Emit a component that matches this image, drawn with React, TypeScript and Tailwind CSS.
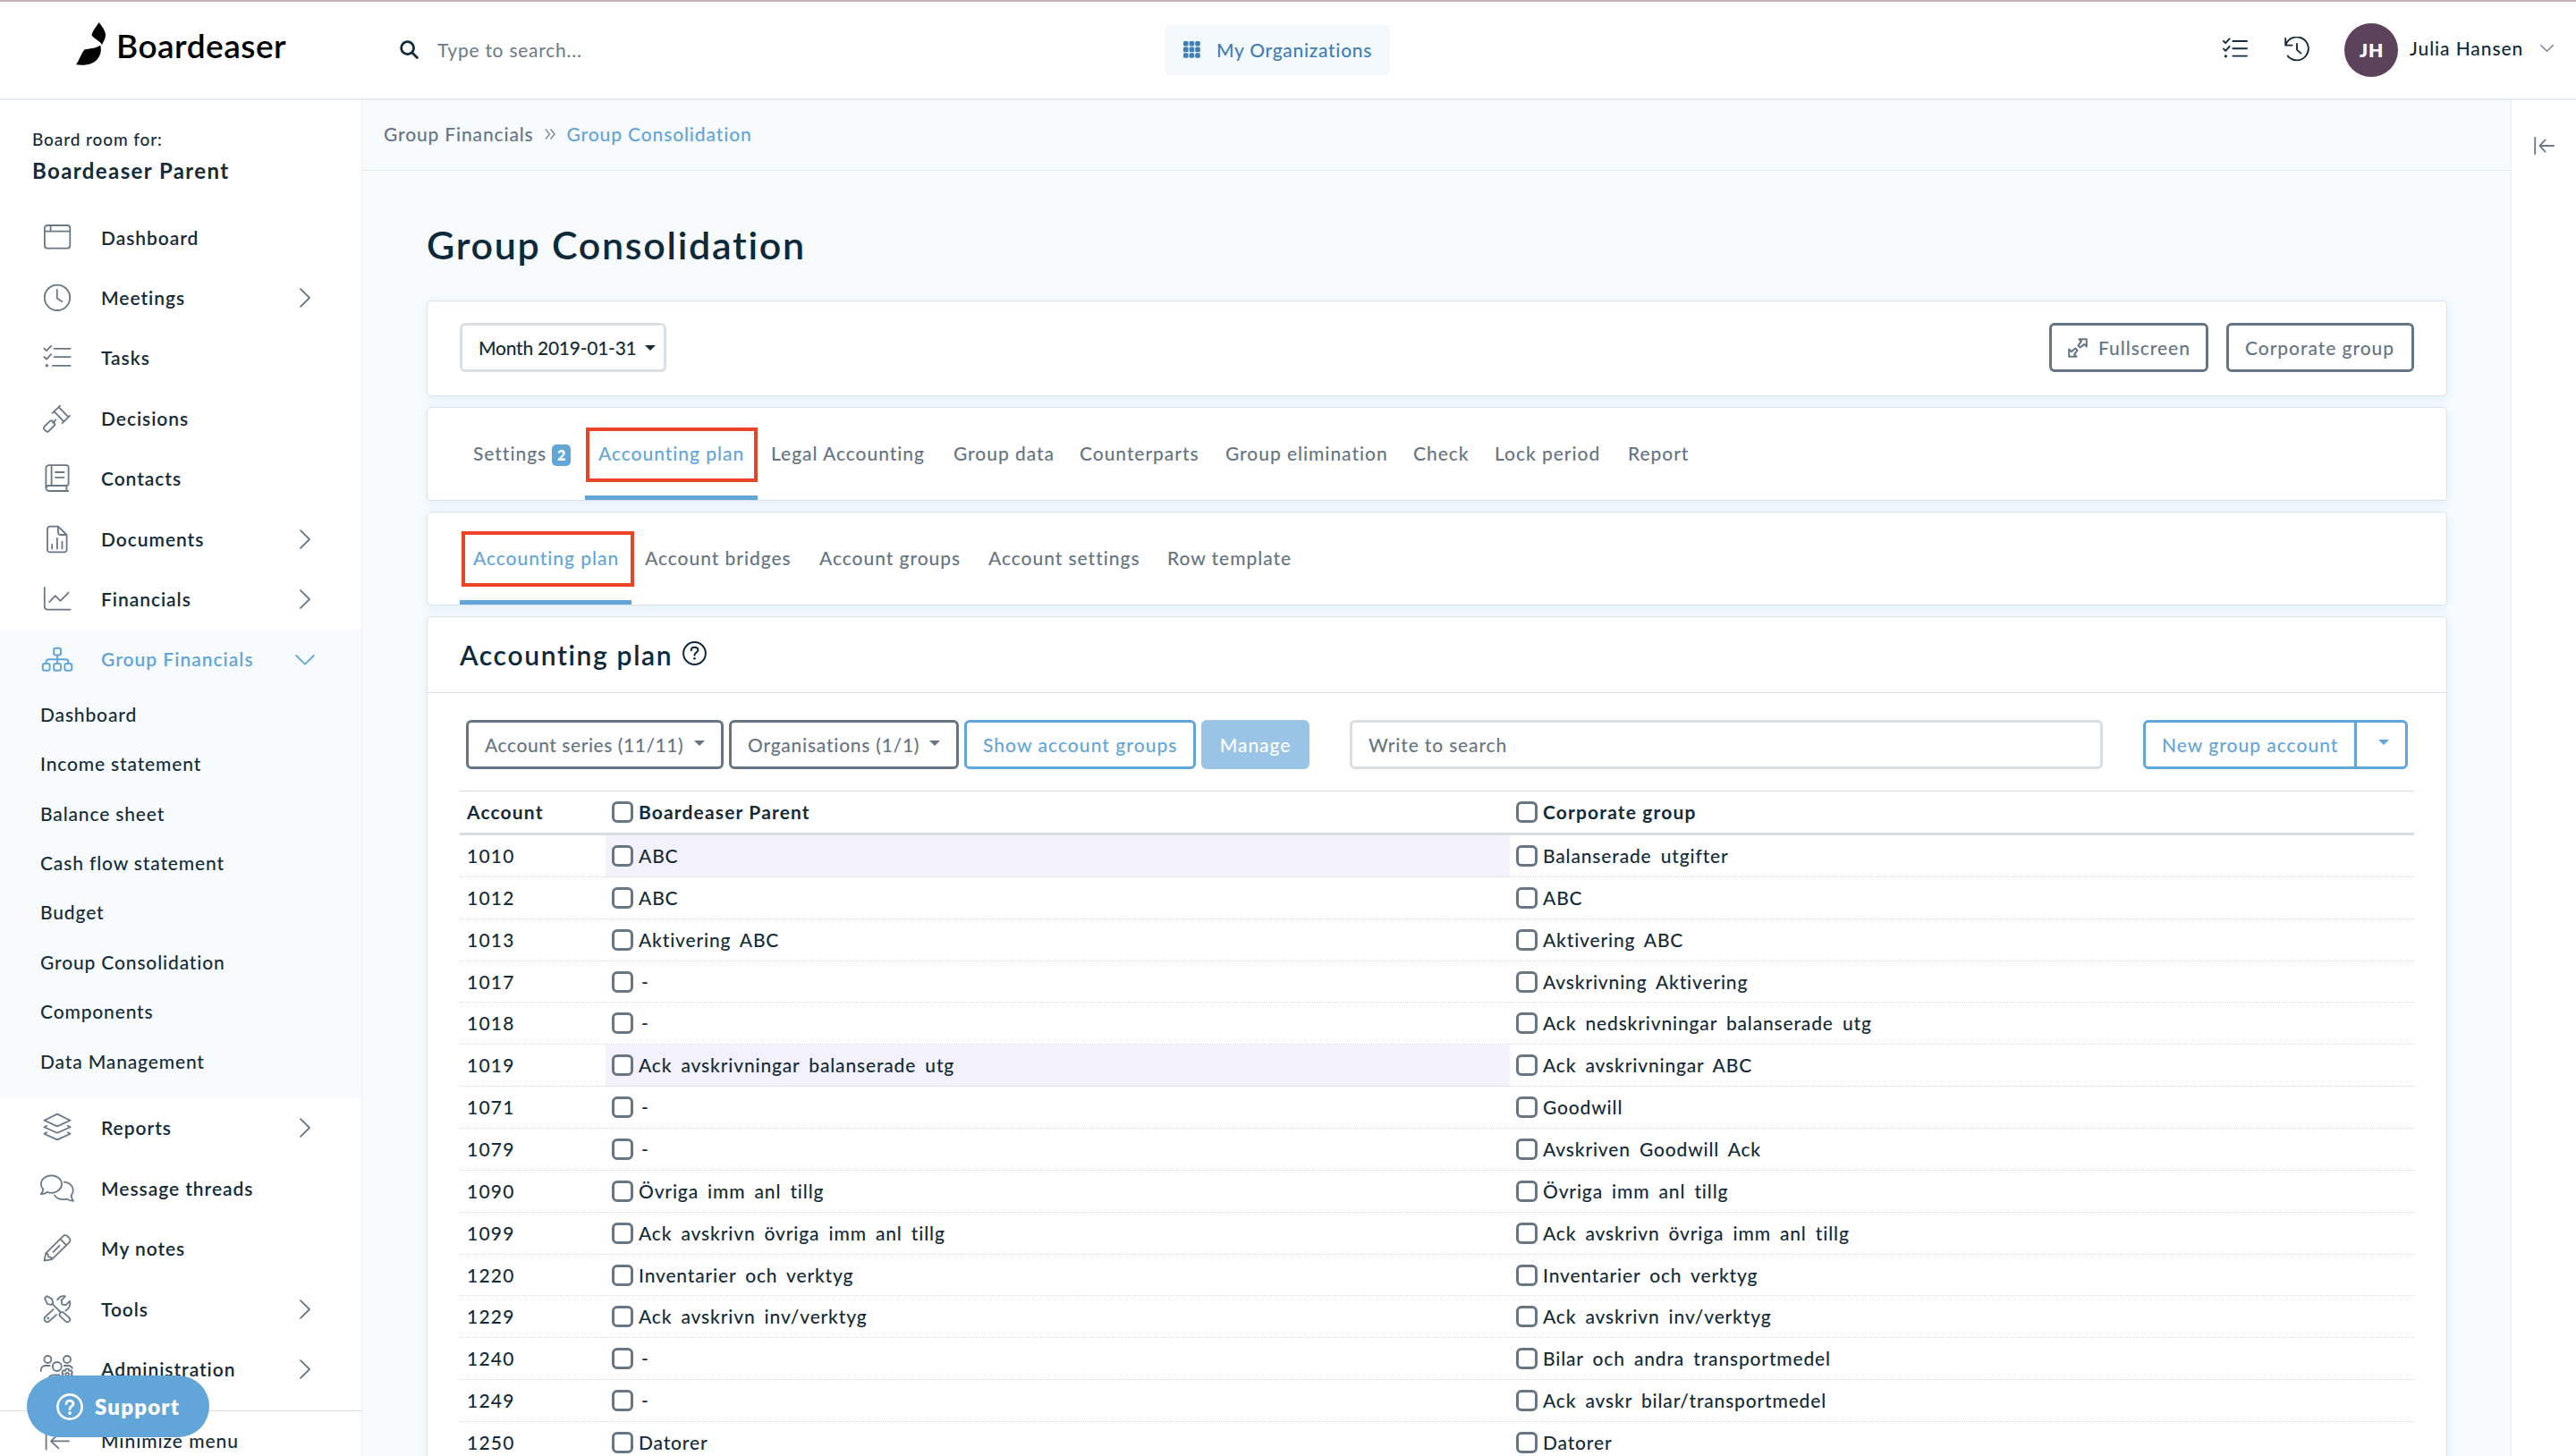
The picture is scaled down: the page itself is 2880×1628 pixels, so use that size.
import React, { ReactNode } from 'react';

type IconProps = { children: ReactNode };

function MenuIcon({ children }: IconProps) {
  return (
    <svg
      className="h-[30px] w-[38px] shrink-0 overflow-visible"
      viewBox="0 0 38 30"
      fill="none"
      stroke="currentColor"
      strokeWidth="1.8"
      strokeLinecap="round"
      strokeLinejoin="round"
    >
      {children}
    </svg>
  );
}

const dashboardIcon = (
  <MenuIcon>
    <rect x="4.9" y="1" width="28.4" height="25.6" rx="3" />
    <path d="M5 7.6h28.2M11.6 1v6.6" />
  </MenuIcon>
);
const clockIcon = (
  <MenuIcon>
    <circle cx="19" cy="14.8" r="14.2" />
    <path d="M18.8 6v9.4l5.6 3.9" />
  </MenuIcon>
);
const tasksIcon = (
  <MenuIcon>
    <path d="M4.4 4.6 7 7.2 12.2 1.8M4.4 14 7 16.6l5.2-5.4M15.6 4.8H33.6M15.6 14.2H33.6M13.8 23.8H33.6" />
    <circle cx="7.4" cy="23.8" r="1.7" fill="currentColor" stroke="none" />
  </MenuIcon>
);
const gavelIcon = (
  <MenuIcon>
    <path d="M13.6 8.9 22.2.6M24.6 20.2 33 11.8M15.6 7.2 26.2 18.2M20.8 2.4 31.3 13.2M17.4 16.4 14 19.8" />
    <rect x="3.6" y="20" width="13" height="7" rx="2.4" transform="rotate(-45 10.1 23.5)" />
  </MenuIcon>
);
const contactsIcon = (
  <MenuIcon>
    <path d="M31.2 29H10a3.6 3.6 0 0 1-3.6-3.6V3.4A3.2 3.2 0 0 1 9.6 .2H29a2.6 2.6 0 0 1 2.6 2.6V20.8a2.2 2.2 0 0 1-2.2 2.2H9.6a3 3 0 0 0-3 2.6M29.4 23v6M12.6 .4v22.4M17 8h9.6M17 13.8h9.6" />
  </MenuIcon>
);
const documentsIcon = (
  <MenuIcon>
    <path d="M20 .6h-9A3 3 0 0 0 8 3.6V26.4a3 3 0 0 0 3 3h15.6a3 3 0 0 0 3-3V10zM20 .6V7.6A2.4 2.4 0 0 0 22.4 10h7.2M13.2 21v4.4M18.9 13.8V25.4M24.5 17.6v7.8" />
  </MenuIcon>
);
const chartIcon = (
  <MenuIcon>
    <path d="M4.8 2v21.2a3.4 3.4 0 0 0 3.4 3.4H33.6M10.2 18.2 16.8 11.2l5.7 5.6L31.6 7.6" />
  </MenuIcon>
);
const orgIcon = (
  <MenuIcon>
    <g strokeWidth="2">
      <rect x="15.2" y="2.8" width="7.8" height="7.8" rx="2" />
      <rect x="2.8" y="20" width="7.8" height="7.8" rx="2" />
      <rect x="15.2" y="20" width="7.8" height="7.8" rx="2" />
      <rect x="27.4" y="20" width="7.8" height="7.8" rx="2" />
      <path d="M19.1 10.8V20M6.7 20v-2.2a2.6 2.6 0 0 1 2.6-2.6H28.7a2.6 2.6 0 0 1 2.6 2.6V20" />
    </g>
  </MenuIcon>
);
const layersIcon = (
  <MenuIcon>
    <path d="M19 -.4 33.6 6.8 19 13.4 4.4 6.8zM7.2 12.8 4.4 14.3 19 20.8 33.6 14.3 30.8 12.8M7.2 20.2 4.4 21.7 19 28.4 33.6 21.7 30.8 20.2" />
  </MenuIcon>
);
const messagesIcon = (
  <MenuIcon>
    <path d="M12.4 .4C19 .4 24 4.6 24 10s-5 9.8-11.6 9.8c-1.6 0-3.2-.3-4.6-.8C6 20.4 3.4 21.2 .8 21.2 2.4 19.6 3.2 17.6 3.2 15.6 1.7 14 .9 12 .9 10 .9 4.6 6 .4 12.4 .4z" />
    <path d="M26.8 7.6C32.6 8 36.8 12 36.8 17c0 2.2-.8 4-2.2 5.6.2 2.4 1 4.4 2.4 6.2-3 0-5.2-.8-7-2.2-1.4.4-2.6.6-4 .6-4.4 0-8.2-1.8-10-4.8" />
  </MenuIcon>
);
const pencilIcon = (
  <MenuIcon>
    <path d="M4.5 28.6 6.2 20.4 25.6 1.2a3.3 3.3 0 0 1 4.7 0l2.2 2.2a3.3 3.3 0 0 1 0 4.7L13 27.2zM6.2 20.4l2.2.7.8 3.2 3.1.6.7 2.3M22.4 4.4l6.9 6.9M14.4 18.8l7.2-7" />
  </MenuIcon>
);
const toolsIcon = (
  <MenuIcon>
    <path d="M5 2.6 7.6 .2 13.2 3.4 14.2 7.8 12.2 10 7.8 8.8zM14 9.4 22.6 18M21.6 22.2C20.8 20 22.6 17.8 25.4 18.2L32.6 24.6a2.8 2.8 0 0 1-3.6 4.2z" />
    <path d="M19.2 4.4C21 1 24.6 -.4 28 .4L23.6 5.2 24.4 9.6 28.6 10.2 33 5.8C34.2 9.6 32.4 14.6 28.4 16.4M14.6 15.2 5.6 23.4a3.2 3.2 0 0 0 4.6 4.8L18 21.2" />
    <circle cx="8.8" cy="25" r=".5" />
  </MenuIcon>
);
const adminIcon = (
  <MenuIcon>
    <circle cx="8.4" cy="4" r="4" />
    <circle cx="30" cy="4" r="4" />
    <circle cx="18.8" cy="12" r="5" />
    <path d="M.8 17v-1.2A4.8 4.8 0 0 1 5.6 11h5M26.8 11h4.8a4.8 4.8 0 0 1 4.2 2.8M10 23.6c1-1.6 2.4-2.2 4.2-2.2h7.2" />
    <path d="M28.6 14.6h3l.6 2.2 2.2-.6 1.6 2.6-1.6 1.6 1.6 1.8-1.6 2.6h-8.6l-1.6-2.6 1.6-1.8-1.6-1.6 1.6-2.6 2.2.6z" />
    <circle cx="30.1" cy="20.6" r="1.8" />
  </MenuIcon>
);
const collapseIcon = (
  <MenuIcon>
    <path d="M6.6 5v18.6M12 14.4H32M20.4 6.4 12 14.4l8.4 8" />
  </MenuIcon>
);

function Chevron({ open = false }: { open?: boolean }) {
  return (
    <svg
      className="mr-[52px] ml-auto h-[22px] w-[22px] shrink-0"
      viewBox="0 0 22 22"
      fill="none"
      stroke="currentColor"
      strokeWidth="1.8"
      strokeLinecap="round"
      strokeLinejoin="round"
    >
      <path d={open ? 'M1.2 7 11 16.6 20.8 7' : 'M6 1.2 16 11 6 20.8'} />
    </svg>
  );
}

type Item = { label: string; icon: ReactNode; expandable?: boolean };

const topItems: Item[] = [
  { label: 'Dashboard', icon: dashboardIcon },
  { label: 'Meetings', icon: clockIcon, expandable: true },
  { label: 'Tasks', icon: tasksIcon },
  { label: 'Decisions', icon: gavelIcon },
  { label: 'Contacts', icon: contactsIcon },
  { label: 'Documents', icon: documentsIcon, expandable: true },
  { label: 'Financials', icon: chartIcon, expandable: true },
];
const bottomItems: Item[] = [
  { label: 'Reports', icon: layersIcon, expandable: true },
  { label: 'Message threads', icon: messagesIcon },
  { label: 'My notes', icon: pencilIcon },
  { label: 'Tools', icon: toolsIcon, expandable: true },
  { label: 'Administration', icon: adminIcon, expandable: true },
];
const subItems = [
  'Dashboard',
  'Income statement',
  'Balance sheet',
  'Cash flow statement',
  'Budget',
  'Group Consolidation',
  'Components',
  'Data Management',
];

function MenuRow({ item }: { item: Item }) {
  return (
    <a className="flex h-[67.4px] shrink-0 items-center pl-[45px] text-[#687886]">
      {item.icon}
      <span className="ml-[30px] font-semibold tracking-[0.95px] text-[#142b39]">{item.label}</span>
      {item.expandable && <Chevron />}
    </a>
  );
}

function Sidebar() {
  return (
    <aside className="relative flex w-[405px] shrink-0 flex-col overflow-hidden border-r border-[#eceef3] bg-white">
      <div className="flex h-[120px] shrink-0 flex-col pt-[32px] pl-[36px]">
        <span className="text-[19px] leading-[24px] font-medium tracking-[0.9px]">Board room for:</span>
        <span className="mt-[8px] text-[24px] leading-[30px] font-bold tracking-[1.4px]">Boardeaser Parent</span>
      </div>
      {topItems.map((item) => (
        <MenuRow key={item.label} item={item} />
      ))}
      <div className="shrink-0 bg-[#f7fbfe] pb-[13.4px]">
        <a className="flex h-[67.4px] items-center pl-[45px] text-[#62a5d9]">
          {orgIcon}
          <span className="ml-[30px] font-semibold tracking-[1px]">Group Financials</span>
          <Chevron open />
        </a>
        {subItems.map((label) => (
          <a key={label} className="flex h-[55.4px] items-center pl-[45px] font-medium tracking-[0.85px]">
            {label}
          </a>
        ))}
      </div>
      {bottomItems.map((item) => (
        <MenuRow key={item.label} item={item} />
      ))}
      <div className="absolute bottom-0 left-0 flex h-[51px] w-full overflow-hidden border-t border-[#d9dcdf] bg-white pt-[19px] pl-[45px] text-[#687886]">
        {collapseIcon}
        <span className="ml-[30px] font-medium tracking-[0.95px] text-[#142b39]">Minimize menu</span>
      </div>
      <button className="absolute bottom-[21px] left-[30px] flex h-[69px] w-[204px] items-center rounded-full bg-[#62a5d9] pl-[33px] text-white">
        <svg className="h-[30px] w-[30px]" viewBox="0 0 30 30" fill="none" stroke="currentColor" strokeWidth="2.6">
          <circle cx="15" cy="15" r="13.6" />
          <path d="M11 11.8c0-2.2 1.8-3.6 4-3.6s4 1.3 4 3.4c0 2.8-4 2.9-4 5.6v.5" strokeWidth="2.8" strokeLinecap="round" />
          <circle cx="15" cy="22" r="1.9" fill="currentColor" stroke="none" />
        </svg>
        <span className="ml-[13px] text-[24px] font-extrabold tracking-[1.2px]">Support</span>
      </button>
    </aside>
  );
}

function Header() {
  return (
    <header className="flex h-[112px] shrink-0 items-center border-t-2 border-b-2 border-t-[#c8b4bb] border-b-[#e4eaef] bg-white pb-px">
      <div className="flex w-[447px] shrink-0 items-center pl-[85px]">
        <svg className="-mt-[13px] h-[48px] w-[33px]" viewBox="0 0 33 48" fill="#000">
          <path d="M25.5 0C30 5.5 33 10 33 14.5c0 4-2.5 7-4 10.5C26.5 20.5 21 19 17.5 14.5 18.5 9 23 5 25.5 0z" />
          <path d="M9.5 30.5C15 29 22 29.5 27.2 25.5 28.5 31 28 36 24 41c-5.5 6.6-14 7.4-24 6.3C4 42 5.5 35 9.5 30.5z" />
        </svg>
        <span className="-mt-[9px] ml-[12px] text-[37px] leading-[44px] font-semibold tracking-[0.5px] text-black">Boardeaser</span>
      </div>
      <svg className="h-[21px] w-[21px]" viewBox="0 0 21 21" fill="none" stroke="#142b39" strokeWidth="2.8" strokeLinecap="round">
        <circle cx="8.6" cy="8.6" r="7" />
        <path d="M13.9 13.9 19.4 19.4" />
      </svg>
      <span className="ml-[21px] w-[813px] tracking-[0.75px] text-[#6b7a87]">Type to search...</span>
      <button className="flex h-[56px] w-[252px] shrink-0 items-center rounded-[6px] bg-[#f4f9fd] pl-[21px] text-[#3f7fb5]">
        <svg className="h-[19px] w-[19px]" viewBox="0 0 19 19" fill="currentColor">
          {[0, 6.6, 13.2].map((y) =>
            [0, 6.6, 13.2].map((x) => <rect key={`${x}-${y}`} x={x} y={y} width="5.6" height="5.6" rx="1.5" />),
          )}
        </svg>
        <span className="ml-[18px] font-medium tracking-[0.7px]">My Organizations</span>
      </button>
      <div className="ml-auto flex items-center pr-[25px] text-[#142b39]">
        <svg className="-mt-[3px] mr-[41px] h-[24px] w-[28px]" viewBox="0 0 28 24" fill="none" stroke="currentColor" strokeWidth="1.9" strokeLinecap="round" strokeLinejoin="round">
          <path d="M1 4 3.2 6.2 7.6 1.4M1 12.6l2.2 2.2 4.4-4.8M11.4 4H27M11.4 12.2H27M11.4 20.6H27" />
          <circle cx="3.4" cy="20.8" r="1.6" fill="currentColor" stroke="none" />
        </svg>
        <svg className="-mt-[2px] mr-[39px] h-[28px] w-[28px]" viewBox="0 0 28 28" fill="none" stroke="currentColor" strokeWidth="1.9" strokeLinecap="round" strokeLinejoin="round">
          <path d="M1.2 2v7.6h7.4M1.6 9A13 13 0 1 1 3.8 21.6M14 8v6.6l4.4 4" />
        </svg>
        <span className="flex h-[60px] w-[60px] items-center justify-center rounded-full bg-[#5d425b] pl-px text-[21px] font-extrabold tracking-[0.8px] text-white">JH</span>
        <span className="-mt-[3px] ml-[13px] w-[146px] font-medium tracking-[0.9px]">Julia Hansen</span>
        <svg className="-mt-[4px] h-[8px] w-[15px]" viewBox="0 0 15 8" fill="none" stroke="#6f7f8c" strokeWidth="1.4" strokeLinecap="round">
          <path d="M.8 .8 7.5 7.2 14.2 .8" />
        </svg>
      </div>
    </header>
  );
}

function Caret({ className = '' }: { className?: string }) {
  return (
    <svg className={`h-[6px] w-[12px] shrink-0 ${className}`} viewBox="0 0 12 6" fill="currentColor">
      <path d="M0 0h12L6 6z" />
    </svg>
  );
}

const card = 'shrink-0 rounded-[5px] border border-[#dbe3ea] bg-white shadow-[0_3px_12px_rgba(98,165,217,0.15)]';

const mainTabs = [
  'Settings',
  'Accounting plan',
  'Legal Accounting',
  'Group data',
  'Counterparts',
  'Group elimination',
  'Check',
  'Lock period',
  'Report',
];
const subTabs = ['Accounting plan', 'Account bridges', 'Account groups', 'Account settings', 'Row template'];

type TabsProps = { labels: string[]; active: number; columns: string; badge?: string; frame: string };

function Tabs({ labels, active, columns, badge, frame }: TabsProps) {
  return (
    <nav className={`${card} grid h-[105px] pl-[36px] ${columns}`}>
      {labels.map((label, i) => (
        <a
          key={label}
          className={`relative flex items-center border-b-[5px] pt-[4px] pl-[15px] font-medium tracking-[0.95px] whitespace-nowrap ${
            i === active ? 'border-[#62a5d9] text-[#62a5d9]' : 'border-transparent text-[#667583]'
          }`}
        >
          {label}
          {badge && i === 0 && (
            <span className="mt-[3px] ml-[6px] flex h-[24px] w-[21px] items-center justify-center rounded-[5px] bg-[#62a5d9] pl-px text-[16px] font-extrabold text-white">
              {badge}
            </span>
          )}
          {i === active && <span className={`absolute border-4 border-[#ea4326] ${frame}`} />}
        </a>
      ))}
    </nav>
  );
}

type Row = [string, string, string, boolean?];
const rows: Row[] = [
  ['1010', 'ABC', 'Balanserade utgifter', true],
  ['1012', 'ABC', 'ABC'],
  ['1013', 'Aktivering ABC', 'Aktivering ABC'],
  ['1017', '-', 'Avskrivning Aktivering'],
  ['1018', '-', 'Ack nedskrivningar balanserade utg'],
  ['1019', 'Ack avskrivningar balanserade utg', 'Ack avskrivningar ABC', true],
  ['1071', '-', 'Goodwill'],
  ['1079', '-', 'Avskriven Goodwill Ack'],
  ['1090', 'Övriga imm anl tillg', 'Övriga imm anl tillg'],
  ['1099', 'Ack avskrivn övriga imm anl tillg', 'Ack avskrivn övriga imm anl tillg'],
  ['1220', 'Inventarier och verktyg', 'Inventarier och verktyg'],
  ['1229', 'Ack avskrivn inv/verktyg', 'Ack avskrivn inv/verktyg'],
  ['1240', '-', 'Bilar och andra transportmedel'],
  ['1249', '-', 'Ack avskr bilar/transportmedel'],
  ['1250', 'Datorer', 'Datorer'],
];

function Check({ label }: { label: string }) {
  return (
    <>
      <span className="h-[24px] w-[24px] shrink-0 rounded-[6px] border-[3px] border-[#687683] bg-white" />
      <span className={label === '-' ? 'ml-[9px]' : 'ml-[6px]'}>{label}</span>
    </>
  );
}

const tableGrid = 'grid grid-cols-[163px_1011px_1011px]';
const button = 'flex h-[55px] shrink-0 items-center rounded-[6px] border-[3px] font-medium whitespace-nowrap';

function AccountingPlan() {
  return (
    <section className={`${card} flex h-[1000px] flex-col`}>
      <div className="flex h-[85px] shrink-0 items-center border-b border-[#dbe0ea] pb-px pl-[36px] text-[#0e2a3a]">
        <h2 className="text-[30px] font-semibold tracking-[1.65px]">Accounting plan</h2>
        <svg className="-mt-[3px] ml-[11px] h-[27px] w-[27px]" viewBox="0 0 27 27" fill="none" stroke="currentColor" strokeWidth="2" strokeLinecap="round">
          <circle cx="13.5" cy="13.5" r="12.4" />
          <path d="M9.8 10.2c0-2 1.5-3.4 3.7-3.4s3.9 1.2 3.9 3.2c0 2.6-3.9 2.7-3.9 5.4v.4" />
          <circle cx="13.5" cy="19.3" r="1.3" fill="currentColor" stroke="none" />
        </svg>
      </div>
      <div className="mt-[30px] flex shrink-0 pl-[43px]">
        <button className={`${button} mr-[6px] w-[288px] border-[#667583] pl-[18px] tracking-[0.55px] text-[#667583]`}>
          Account series (11/11)
          <Caret className="-mt-[4px] ml-[12px]" />
        </button>
        <button className={`${button} mr-[6px] w-[257px] border-[#667583] pl-[18px] tracking-[0.75px] text-[#667583]`}>
          Organisations (1/1)
          <Caret className="-mt-[4px] ml-[11px]" />
        </button>
        <button className={`${button} mr-[6px] w-[259px] border-[#62a5d9] pl-[18px] tracking-[1.05px] text-[#62a5d9]`}>Show account groups</button>
        <button className={`${button} w-[121px] justify-center border-[#9ac4e6] bg-[#9ac4e6] tracking-[0.9px] text-white`}>Manage</button>
        <div className={`${button} ml-[45px] w-[842px] border-[#d8dfe4] pl-[18px] tracking-[0.85px] text-[#687683]`}>Write to search</div>
        <div className={`${button} ml-[45px] w-[296px] border-[#62a5d9] tracking-[1px] text-[#62a5d9]`}>
          <span className="flex h-full w-[236px] items-center border-r-[3px] border-[#62a5d9] pl-[18px]">New group account</span>
          <Caret className="-mt-[5px] ml-[24px]" />
        </div>
      </div>
      <div className="mt-[24px] ml-[36px] w-[2185px] shrink-0 border-t border-[#d5dde3]">
        <div className={`${tableGrid} h-[49px] border-b-[3px] border-[#d8dfe4] font-bold tracking-[1.15px]`}>
          <span className="flex items-center pl-[8px]">Account</span>
          <span className="flex items-center pl-[7px]">
            <Check label="Boardeaser Parent" />
          </span>
          <span className="flex items-center pl-[7px]">
            <Check label="Corporate group" />
          </span>
        </div>
        {rows.map(([account, own, group, marked]) => (
          <div key={account} className={`${tableGrid} h-[46.86px] font-medium tracking-[0.83px] [word-spacing:4px]`}>
            <span className="flex items-center border-b border-dotted border-[#d3dae0] pl-[8px] tracking-[1.2px]">{account}</span>
            <span className={`flex items-center border-b border-dotted border-[#d3dae0] pl-[7px] ${marked ? 'bg-[#f3f1fc]' : ''}`}>
              <Check label={own} />
            </span>
            <span className="flex items-center border-b border-dotted border-[#d3dae0] pl-[7px]">
              <Check label={group} />
            </span>
          </div>
        ))}
      </div>
    </section>
  );
}

export default function App() {
  return (
    <div className="flex h-screen w-full flex-col overflow-hidden bg-[#f7fbfe] font-['Lato',sans-serif] text-[21px] leading-[28px] text-[#142b39]">
      <Header />
      <div className="flex min-h-0 flex-1">
        <Sidebar />
        <main className="flex min-w-0 flex-1 flex-col overflow-hidden">
          <div className="flex h-[79px] shrink-0 items-center border-b border-[#e1e8ee] pb-[3px] pl-[24px] font-medium">
            <span className="tracking-[0.85px] text-[#667583]">Group Financials</span>
            <svg className="mr-[13px] ml-[12px] h-[12px] w-[12px]" viewBox="0 0 12 12" fill="none" stroke="#7b8995" strokeWidth="1.4">
              <path d="M1 .5 5.5 6 1 11.5M6.5 .5 11 6 6.5 11.5" />
            </svg>
            <span className="tracking-[0.87px] text-[#62a5d9]">Group Consolidation</span>
          </div>
          <div className="flex min-h-0 flex-1 flex-col gap-[12px] overflow-hidden pr-[71px] pl-[72px]">
            <h1 className="mt-[58px] mb-[25px] shrink-0 text-[43px] leading-[50px] font-semibold tracking-[1.7px] text-[#0e2a3a]">Group Consolidation</h1>
            <section className={`${card} flex h-[107px] items-start pt-[24px] pr-[36px] pl-[36px]`}>
              <button className={`${button} mr-auto w-[231px] border-[#d8dfe5] pl-[18px] tracking-[-0.25px] text-[#142b39]`}>
                Month 2019-01-31
                <Caret className="ml-[9px]" />
              </button>
              <button className={`${button} mr-[20px] w-[178px] border-[#667583] pl-[18px] tracking-[0.95px] text-[#667583]`}>
                <svg className="mr-[12px] h-[22px] w-[22px]" viewBox="0 0 22 22" fill="none" stroke="currentColor" strokeWidth="2" strokeLinejoin="round">
                  <path d="M12.5 1.2h8.3v8.3l-2.6-2.6-4.6 3.6-2.2-2.2 3.6-4.6zM9.5 20.8H1.2v-8.3l2.6 2.6 4.6-3.6 2.2 2.2L7 18.3z" />
                </svg>
                Fullscreen
              </button>
              <button className={`${button} w-[210px] border-[#667583] pl-[18px] tracking-[0.95px] text-[#667583]`}>Corporate group</button>
            </section>
            <Tabs
              labels={mainTabs}
              active={1}
              badge="2"
              columns="grid-cols-[140px_193px_204px_141px_163px_210px_91px_149px_99px]"
              frame="top-[22px] left-[1px] h-[61px] w-[192px]"
            />
            <Tabs
              labels={subTabs}
              active={0}
              columns="grid-cols-[192px_195px_189px_200px_168px]"
              frame="top-[21px] left-[2px] h-[62px] w-[193px]"
            />
            <AccountingPlan />
          </div>
        </main>
        <aside className="w-[73px] shrink-0 border-l border-[#e8ecf0] bg-white pt-[41px] pl-[25px]">
          <svg className="h-[20px] w-[23px]" viewBox="0 0 23 20" fill="none" stroke="#687886" strokeWidth="1.8" strokeLinecap="round" strokeLinejoin="round">
            <path d="M1.2 1v18M6.4 10H22M12.6 3.4 6.4 10l6.2 6.6" />
          </svg>
        </aside>
      </div>
    </div>
  );
}
